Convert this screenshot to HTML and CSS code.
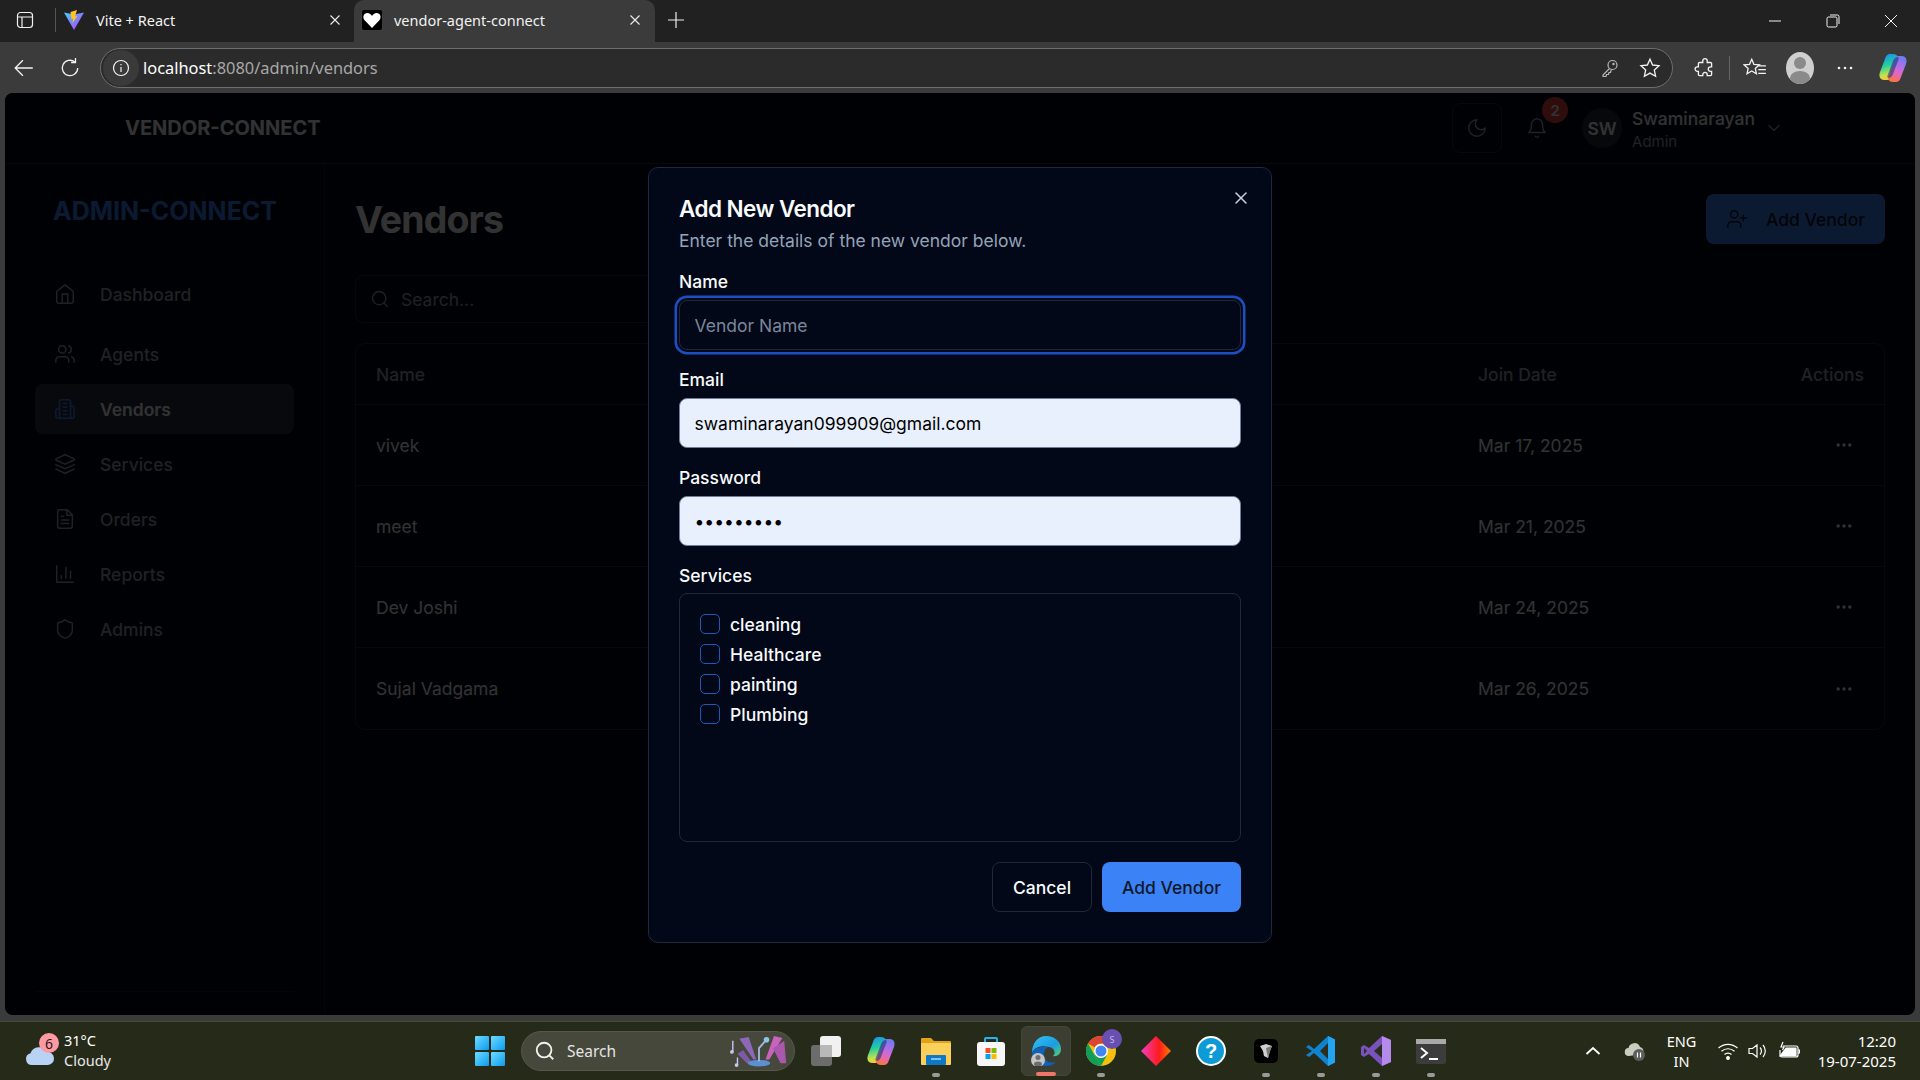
FILE: index.html
```html
<!DOCTYPE html>
<html lang="en">
<head>
<meta charset="utf-8">
<title>vendor-agent-connect</title>
<link rel="stylesheet" href="styles.css">
</head>
<body>
<svg class="defs" width="0" height="0" aria-hidden="true">
  <symbol id="i-home" viewBox="0 0 24 24"><path d="m3 9 9-7 9 7v11a2 2 0 0 1-2 2H5a2 2 0 0 1-2-2z"/><polyline points="9 22 9 12 15 12 15 22"/></symbol>
  <symbol id="i-users" viewBox="0 0 24 24"><path d="M16 21v-2a4 4 0 0 0-4-4H6a4 4 0 0 0-4 4v2"/><circle cx="9" cy="7" r="4"/><path d="M22 21v-2a4 4 0 0 0-3-3.87"/><path d="M16 3.13a4 4 0 0 1 0 7.75"/></symbol>
  <symbol id="i-building" viewBox="0 0 24 24"><path d="M6 22V4a2 2 0 0 1 2-2h8a2 2 0 0 1 2 2v18Z"/><path d="M6 12H4a2 2 0 0 0-2 2v6a2 2 0 0 0 2 2h2"/><path d="M18 9h2a2 2 0 0 1 2 2v9a2 2 0 0 1-2 2h-2"/><path d="M10 6h4"/><path d="M10 10h4"/><path d="M10 14h4"/><path d="M10 18h4"/></symbol>
  <symbol id="i-layers" viewBox="0 0 24 24"><path d="m12.83 2.18a2 2 0 0 0-1.66 0L2.6 6.08a1 1 0 0 0 0 1.83l8.58 3.91a2 2 0 0 0 1.66 0l8.58-3.9a1 1 0 0 0 0-1.83Z"/><path d="m22 17.65-9.17 4.16a2 2 0 0 1-1.66 0L2 17.65"/><path d="m22 12.65-9.17 4.16a2 2 0 0 1-1.66 0L2 12.65"/></symbol>
  <symbol id="i-file" viewBox="0 0 24 24"><path d="M14.5 2H6a2 2 0 0 0-2 2v16a2 2 0 0 0 2 2h12a2 2 0 0 0 2-2V7.5L14.5 2z"/><polyline points="14 2 14 8 20 8"/><line x1="16" x2="8" y1="13" y2="13"/><line x1="16" x2="8" y1="17" y2="17"/><line x1="10" x2="8" y1="9" y2="9"/></symbol>
  <symbol id="i-chart" viewBox="0 0 24 24"><path d="M3 3v18h18"/><path d="M18 17V9"/><path d="M13 17V5"/><path d="M8 17v-3"/></symbol>
  <symbol id="i-shield" viewBox="0 0 24 24"><path d="M20 13c0 5-3.5 7.5-7.66 8.95a1 1 0 0 1-.67-.01C7.5 20.5 4 18 4 13V6a1 1 0 0 1 1-1c2 0 4.5-1.2 6.24-2.72a1.17 1.17 0 0 1 1.52 0C14.51 3.81 17 5 19 5a1 1 0 0 1 1 1z"/></symbol>
  <symbol id="i-search" viewBox="0 0 24 24"><circle cx="11" cy="11" r="8"/><path d="m21 21-4.3-4.3"/></symbol>
  <symbol id="i-userplus" viewBox="0 0 24 24"><path d="M16 21v-2a4 4 0 0 0-4-4H6a4 4 0 0 0-4 4v2"/><circle cx="9" cy="7" r="4"/><line x1="19" x2="19" y1="8" y2="14"/><line x1="22" x2="16" y1="11" y2="11"/></symbol>
  <symbol id="i-moon" viewBox="0 0 24 24"><path d="M12 3a6 6 0 0 0 9 9 9 9 0 1 1-9-9Z"/></symbol>
  <symbol id="i-bell" viewBox="0 0 24 24"><path d="M6 8a6 6 0 0 1 12 0c0 7 3 9 3 9H3s3-2 3-9"/><path d="M10.3 21a1.94 1.94 0 0 0 3.4 0"/></symbol>
  <symbol id="i-chevron" viewBox="0 0 24 24"><path d="m6 9 6 6 6-6"/></symbol>
  <symbol id="i-x" viewBox="0 0 24 24"><path d="M18 6 6 18"/><path d="m6 6 12 12"/></symbol>
  <symbol id="i-dots" viewBox="0 0 24 24"><circle cx="12" cy="12" r="1"/><circle cx="19" cy="12" r="1"/><circle cx="5" cy="12" r="1"/></symbol>
  <symbol id="i-copilot" viewBox="0 0 30 30">
    <path d="M20 4c-1-2-2.500-3-5-3h-2C9 1 8 3 7 6L2 19c-1.500 4 0 8 4 8h3c3 0 4-2 5-5z" fill="url(#g-cop1)"/>
    <path d="M10 26c1 2 2.500 3 5 3h2c4 0 5-2 6-5l5-13c1.500-4 0-8-4-8h-3c-3 0-4 2-5 5z" fill="url(#g-cop2)"/>
    <path d="M19 4c1.500 0 2 1 1.500 2.500L15 21c-.8 2-2 3.500-4 4-1.500 0-2-1-1.500-2.500L15 8c.8-2 2-3.500 4-4z" fill="#0a2f6e" opacity=".55"/>
  </symbol>
  <linearGradient id="g-cop1" x1="0.2" y1="0" x2="0.4" y2="1"><stop offset="0" stop-color="#1a8cf5"/><stop offset=".45" stop-color="#22cfa0"/><stop offset=".8" stop-color="#c8e04a"/><stop offset="1" stop-color="#f8c63c"/></linearGradient>
  <linearGradient id="g-cop2" x1="0.7" y1="0" x2="0.4" y2="1"><stop offset="0" stop-color="#6a7cf2"/><stop offset=".5" stop-color="#c86be0"/><stop offset=".8" stop-color="#f0689a"/><stop offset="1" stop-color="#f5793a"/></linearGradient>
  <linearGradient id="g-vite" x1="0" y1="0" x2="1" y2="1"><stop offset="0" stop-color="#41d1ff"/><stop offset="1" stop-color="#bd34fe"/></linearGradient>
  <linearGradient id="g-edge" x1="0" y1="0" x2="1" y2="1"><stop offset="0" stop-color="#35c1f1"/><stop offset=".6" stop-color="#1b9de2"/><stop offset="1" stop-color="#52d36a"/></linearGradient>
  <linearGradient id="g-diamond" x1="0" y1="0" x2="1" y2="0"><stop offset="0" stop-color="#f23ec2"/><stop offset=".6" stop-color="#ff1b1b"/><stop offset="1" stop-color="#ff7a00"/></linearGradient>
  <linearGradient id="g-win" x1="0" y1="0" x2="1" y2="1"><stop offset="0" stop-color="#6fdcff"/><stop offset="1" stop-color="#0b9bf0"/></linearGradient>
</svg>

<div class="tabstrip">
  <svg class="chrome-ic sidebar-toggle" viewBox="0 0 20 20"><rect x="2.5" y="2.5" width="15" height="15" rx="3"/><path d="M2.5 7h15M7 7v10.5"/></svg>
  <span class="tab-divider"></span>
  <div class="tab">
    <svg class="favicon" viewBox="0 0 20 20"><path d="M0 2.5 10 20 20 2.5 10 4.5z" fill="url(#g-vite)"/><path d="M13 0 6.5 2 7.5 9 9 8.5 8.5 13 13.5 6 11 6.5z" fill="#ffc61a"/></svg>
    <span class="tab-title">Vite + React</span>
    <svg class="tab-close" viewBox="0 0 12 12"><path d="M1.5 1.5l9 9M10.5 1.5l-9 9"/></svg>
  </div>
  <div class="tab tab-active">
    <span class="heart-box"><svg viewBox="0 0 20 20"><path d="M10 18 2.6 10.2C.2 7.6 1.6 3 5.3 3 7.6 3 9 4.4 10 6c1-1.6 2.4-3 4.7-3 3.7 0 5.1 4.6 2.7 7.2z" fill="#fff"/></svg></span>
    <span class="tab-title">vendor-agent-connect</span>
    <svg class="tab-close" viewBox="0 0 12 12"><path d="M1.5 1.5l9 9M10.5 1.5l-9 9"/></svg>
  </div>
  <svg class="tab-new" viewBox="0 0 18 18"><path d="M9 1v16M1 9h16"/></svg>
  <div class="win-controls">
    <svg class="win-btn" viewBox="0 0 14 14"><path d="M1 7h12"/></svg>
    <svg class="win-btn" viewBox="0 0 14 14"><rect x="1" y="3" width="10" height="10" rx="1.5"/><path d="M4 1h7.5A1.5 1.5 0 0 1 13 2.500V10"/></svg>
    <svg class="win-btn" viewBox="0 0 14 14"><path d="M1 1l12 12M13 1 1 13"/></svg>
  </div>
</div>

<div class="toolbar">
  <svg class="chrome-ic tool-back" viewBox="0 0 20 20"><path d="M18 10H2M9 3l-7 7 7 7"/></svg>
  <svg class="chrome-ic tool-reload" viewBox="0 0 20 20"><path d="M17 10a7 7 0 1 1-2.500-5.400"/><path d="M15 1v4h-4"/></svg>
  <div class="address">
    <span class="site-info"><svg class="chrome-ic" viewBox="0 0 20 20"><circle cx="10" cy="10" r="7.500"/><path d="M10 9v5M10 6v1.200"/></svg></span>
    <span class="url"><span class="url-host">localhost</span>:8080/admin/vendors</span>
    <svg class="chrome-ic addr-key" viewBox="0 0 20 20"><circle cx="12.500" cy="7" r="4.500"/><path d="M9.500 10.500 3 17v1.500h3l.5-2h2l.5-2h1.500l.8-3"/><circle cx="13.500" cy="6" r=".6"/></svg>
    <svg class="chrome-ic addr-star" viewBox="0 0 20 20"><path d="m10 2 2.400 5.300 5.800.6-4.300 3.900 1.200 5.700L10 14.600l-5.100 2.900 1.200-5.700L1.800 7.900l5.800-.6z"/></svg>
  </div>
  <svg class="chrome-ic tool-puzzle" viewBox="0 0 20 20"><path d="M8 3.500a2 2 0 0 1 4 0V5h3a1 1 0 0 1 1 1v3h-1a2 2 0 0 0 0 4h1v3a1 1 0 0 1-1 1h-3v-1a2 2 0 0 0-4 0v1H5a1 1 0 0 1-1-1v-3H3a2 2 0 0 1 0-4h1V6a1 1 0 0 1 1-1h3z"/></svg>
  <span class="tool-divider"></span>
  <svg class="chrome-ic tool-fav" viewBox="0 0 22 20"><path d="M8 2l2 4.600 5 .5-3.700 3.300 1 4.900L8 12.800l-4.300 2.500 1-4.900L1 7.100l5-.5zM14 8h7M14 11.500h7M14 15h7"/></svg>
  <span class="profile"><svg viewBox="0 0 28 32"><circle cx="14" cy="11" r="6" fill="#8a8a8a"/><ellipse cx="14" cy="26" rx="10" ry="7" fill="#8a8a8a"/></svg></span>
  <svg class="tool-dots" viewBox="0 0 18 4"><circle cx="3" cy="2" r="1.300"/><circle cx="9" cy="2" r="1.300"/><circle cx="15" cy="2" r="1.300"/></svg>
  <svg class="tool-copilot"><use href="#i-copilot"/></svg>
</div>

<div class="viewport">
  <header class="app-header">
    <span class="brand">VENDOR-CONNECT</span>
    <div class="header-right">
      <span class="theme-btn"><svg class="lu lu-md"><use href="#i-moon"/></svg></span>
      <span class="bell-wrap"><svg class="lu lu-md"><use href="#i-bell"/></svg><span class="bell-badge">2</span></span>
      <span class="avatar">SW</span>
      <span class="user-text"><span class="user-name">Swaminarayan</span><span class="user-role">Admin</span></span>
      <svg class="lu lu-sm"><use href="#i-chevron"/></svg>
    </div>
  </header>
  <div class="app-body">
    <aside class="sidebar">
      <div class="side-logo">ADMIN-CONNECT</div>
      <nav class="side-nav">
        <a class="nav-item nav-first"><svg class="lu lu-md"><use href="#i-home"/></svg>Dashboard</a>
        <a class="nav-item"><svg class="lu lu-md"><use href="#i-users"/></svg>Agents</a>
        <a class="nav-item nav-active"><svg class="lu lu-md"><use href="#i-building"/></svg>Vendors</a>
        <a class="nav-item"><svg class="lu lu-md"><use href="#i-layers"/></svg>Services</a>
        <a class="nav-item"><svg class="lu lu-md"><use href="#i-file"/></svg>Orders</a>
        <a class="nav-item"><svg class="lu lu-md"><use href="#i-chart"/></svg>Reports</a>
        <a class="nav-item"><svg class="lu lu-md"><use href="#i-shield"/></svg>Admins</a>
      </nav>
      <div class="side-foot"></div>
    </aside>
    <main class="main">
      <div class="page-head">
        <h1 class="page-title">Vendors</h1>
        <span class="add-btn"><svg class="lu lu-md"><use href="#i-userplus"/></svg>Add Vendor</span>
      </div>
      <div class="search-box"><svg class="lu lu-sm"><use href="#i-search"/></svg>Search...</div>
      <div class="table">
        <div class="tr tr-head"><span>Name</span><span>Join Date</span><span class="col-end">Actions</span></div>
        <div class="tr"><span>vivek</span><span>Mar 17, 2025</span><span class="col-end"><svg class="lu lu-sm dots"><use href="#i-dots"/></svg></span></div>
        <div class="tr"><span>meet</span><span>Mar 21, 2025</span><span class="col-end"><svg class="lu lu-sm dots"><use href="#i-dots"/></svg></span></div>
        <div class="tr"><span>Dev Joshi</span><span>Mar 24, 2025</span><span class="col-end"><svg class="lu lu-sm dots"><use href="#i-dots"/></svg></span></div>
        <div class="tr tr-last"><span>Sujal Vadgama</span><span>Mar 26, 2025</span><span class="col-end"><svg class="lu lu-sm dots"><use href="#i-dots"/></svg></span></div>
      </div>
    </main>
  </div>

  <div class="overlay">
    <section class="modal">
      <svg class="lu modal-close"><use href="#i-x"/></svg>
      <h2 class="modal-title">Add New Vendor</h2>
      <p class="modal-desc">Enter the details of the new vendor below.</p>
      <div class="field field-first">
        <label class="field-label">Name</label>
        <input class="input input-focus" type="text" placeholder="Vendor Name">
      </div>
      <div class="field">
        <label class="field-label">Email</label>
        <input class="input input-fill" type="text" value="swaminarayan099909@gmail.com">
      </div>
      <div class="field">
        <label class="field-label">Password</label>
        <input class="input input-fill" type="password" value="123456789">
      </div>
      <label class="field-label services-label">Services</label>
      <div class="services">
        <div class="svc"><span class="check"></span>cleaning</div>
        <div class="svc"><span class="check"></span>Healthcare</div>
        <div class="svc"><span class="check"></span>painting</div>
        <div class="svc"><span class="check"></span>Plumbing</div>
      </div>
      <div class="modal-actions">
        <span class="btn btn-outline">Cancel</span>
        <span class="btn btn-primary">Add Vendor</span>
      </div>
    </section>
  </div>
</div>

<div class="taskbar">
  <div class="weather">
    <span class="weather-ic">
      <svg viewBox="0 0 30 20"><path d="M7 20a6 6 0 0 1-1.500-11.800A9 9 0 0 1 22 7a6.500 6.500 0 0 1 1 13z" fill="#b9d3f5"/></svg>
      <span class="weather-badge">6</span>
    </span>
    <span class="weather-text"><span class="w-temp">31°C</span><span class="w-desc">Cloudy</span></span>
  </div>
  <div class="task-center">
    <span class="slot">
      <svg class="tb-ic" viewBox="0 0 30 30"><rect x="0" y="0" width="14" height="14" fill="url(#g-win)" rx="1"/><rect x="16" y="0" width="14" height="14" fill="url(#g-win)" rx="1"/><rect x="0" y="16" width="14" height="14" fill="url(#g-win)" rx="1"/><rect x="16" y="16" width="14" height="14" fill="url(#g-win)" rx="1"/></svg>
    </span>
    <div class="task-search">
      <svg class="ts-ic"><use href="#i-search"/></svg>
      <span class="ts-text">Search</span>
      <svg class="ts-art" viewBox="0 0 62 34">
        <path d="M10 4 25 26 28 26 20 2z" fill="#8e68b8"/><path d="M56 3 42 26 38 26 47 1z" fill="#c864bc"/><path d="M46 14 54 30H60L58 6z" fill="#a958ae"/><path d="M14 16 24 30H18L8 20z" fill="#7d5aa8"/>
        <ellipse cx="31" cy="30" rx="12" ry="3.500" fill="#5d8fd0"/><path d="M31 28V14l7-8" stroke="#9fb8d8" stroke-width="2" fill="none"/><circle cx="39" cy="5" r="3" fill="#8fc4e4"/>
        <path d="M3 6v12M8 24v8" stroke="#c9c4f0" stroke-width="1.500"/><circle cx="2" cy="18" r="2" fill="#c9c4f0"/><circle cx="7" cy="32" r="2" fill="#c9c4f0"/>
      </svg>
    </div>
    <span class="slot">
      <svg class="tb-ic" viewBox="0 0 30 30"><rect x="0" y="9" width="21" height="21" rx="3" fill="#6c6c6c"/><rect x="9" y="0" width="21" height="21" rx="3" fill="#f1f1f1"/><rect x="9" y="9" width="12" height="12" fill="#b8b8b8"/></svg>
    </span>
    <span class="slot"><svg class="tb-ic"><use href="#i-copilot"/></svg></span>
    <span class="slot">
      <svg class="tb-ic" viewBox="0 0 30 30"><path d="M0 3a1 1 0 0 1 1-1h9l3 3h16a1 1 0 0 1 1 1v3H0z" fill="#e0a416"/><path d="M0 7h30v21a1 1 0 0 1-1 1H1a1 1 0 0 1-1-1z" fill="#fbd05a"/><rect x="5" y="19" width="20" height="10" rx="1" fill="#0f78c8"/><rect x="10" y="22" width="10" height="2" fill="#7cc3f0"/></svg>
      <span class="task-dot"></span>
    </span>
    <span class="slot">
      <svg class="tb-ic" viewBox="0 0 30 30"><path d="M9 6V3a1 1 0 0 1 1-1h10a1 1 0 0 1 1 1v3" fill="none" stroke="#20b5f0" stroke-width="2"/><rect x="1" y="6" width="28" height="24" rx="3" fill="#f7f7f7"/><rect x="9.500" y="12" width="5" height="5" fill="#f25022"/><rect x="15.500" y="12" width="5" height="5" fill="#7fba00"/><rect x="9.500" y="18" width="5" height="5" fill="#00a4ef"/><rect x="15.500" y="18" width="5" height="5" fill="#ffb900"/></svg>
    </span>
    <span class="slot slot-active">
      <svg class="tb-ic" viewBox="0 0 30 30"><path d="M15 0c9 0 15 6 15 13 0 5-4 8-8 7 3-2 2-8-4-9C9 9 3 12 1 17 1 7 7 0 15 0z" fill="url(#g-edge)"/><path d="M1 17c0 8 7 13 14 13 4 0 7-1 10-4-7 2-12-1-12-8 0-4 2-6 4-7-8-1-14 1-16 6z" fill="#0f62b8"/><circle cx="7" cy="24" r="7" fill="#c5c5c5"/><circle cx="7" cy="21.500" r="2.500" fill="#6d6d6d"/><ellipse cx="7" cy="28" rx="4" ry="2.500" fill="#6d6d6d"/></svg>
      <span class="task-dot task-dot-open"></span>
    </span>
    <span class="slot">
      <svg class="tb-ic" viewBox="0 0 30 30"><circle cx="15" cy="15" r="15" fill="#f4c20d"/><path d="M15 0a15 15 0 0 1 13 7.500H15A7.500 7.500 0 0 0 8.500 11.300L2 7.500A15 15 0 0 1 15 0z" fill="#db4437"/><path d="M2 7.500 8.500 19 15 30A15 15 0 0 1 2 7.500z" fill="#0f9d58"/><path d="M8.500 11 8.500 19 15 30 21 19 13 22z" fill="#0f9d58"/><circle cx="15" cy="15" r="7" fill="#fff"/><circle cx="15" cy="15" r="5.500" fill="#4285f4"/></svg>
      <span class="chrome-badge">S</span>
      <span class="task-dot"></span>
    </span>
    <span class="slot">
      <svg class="tb-ic" viewBox="0 0 30 30"><path d="M15 0 30 15 15 30 0 15z" fill="url(#g-diamond)"/></svg>
    </span>
    <span class="slot">
      <svg class="tb-ic" viewBox="0 0 30 30"><circle cx="15" cy="15" r="14" fill="#0d9bd8" stroke="#fff" stroke-width="2"/><text class="help-mark" x="15" y="22" text-anchor="middle">?</text></svg>
    </span>
    <span class="slot">
      <svg class="tb-ic" viewBox="0 0 30 30"><rect x="3" y="3" width="24" height="24" rx="5" fill="#000"/><path d="M9 10 15 8 21 10 19 15 17 22 13 20 12 15z" fill="#cfcfcf"/><path d="M15 12 21 10 19 15 17 22z" fill="#787878"/></svg>
      <span class="task-dot"></span>
    </span>
    <span class="slot">
      <svg class="tb-ic" viewBox="0 0 30 30"><path d="M22 0 29 3.500V26.500L22 30 8 17 3 21 0 19 6 15 0 11 3 9l5 4z" fill="#0f82d0"/><path d="M22 7 14 15l8 8z" fill="#2c2f1f"/><path d="M22 0 29 3.500V26.500L22 30z" fill="#24a4ee"/></svg>
      <span class="task-dot"></span>
    </span>
    <span class="slot">
      <svg class="tb-ic" viewBox="0 0 30 30"><path d="M21 0 30 4V26L21 30 8 18 3 21 0 19V11L3 9l5 3z" fill="#7a52bc"/><path d="M21 8 13 15l8 7z" fill="#2c2f1f"/><path d="M21 0 30 4V26L21 30z" fill="#b48bea"/><path d="M3 12v6l3-3z" fill="#2c2f1f"/></svg>
      <span class="task-dot"></span>
    </span>
    <span class="slot">
      <svg class="tb-ic" viewBox="0 0 30 30"><rect x="0" y="3" width="30" height="25" rx="2" fill="#3c3c3c"/><rect x="0" y="3" width="30" height="5" fill="#a9a9a9"/><path d="M5 12l6 5-6 5" fill="none" stroke="#fff" stroke-width="2"/><path d="M13 23h9" stroke="#fff" stroke-width="2"/></svg>
      <span class="task-dot"></span>
    </span>
  </div>
  <div class="tray">
    <svg class="tray-chev" viewBox="0 0 16 10"><path d="M1.500 8 8 2l6.500 6"/></svg>
    <svg class="tray-cloud" viewBox="0 0 22 20"><path d="M5 15a4 4 0 0 1-.5-8A6 6 0 0 1 16 6a4 4 0 0 1 2 7z" fill="#c9cdc0"/><circle cx="15" cy="14" r="6" fill="#5b5e5a"/><path d="M13.500 11.500v5M16.500 11.500v5" stroke="#fff" stroke-width="1.200"/></svg>
    <span class="tray-lang"><span>ENG</span><span>IN</span></span>
    <svg class="tray-ic" viewBox="0 0 22 20"><path d="M1.500 7a14 14 0 0 1 19 0M4.500 10.300a9.500 9.500 0 0 1 13 0M7.500 13.500a5 5 0 0 1 7 0"/><circle cx="11" cy="17" r="1.300" fill="#fff"/></svg>
    <svg class="tray-ic" viewBox="0 0 22 20"><path d="M2 7.500v5h3.500L10 16V4L5.500 7.500zM13 6.500a5 5 0 0 1 0 7M16 4a9 9 0 0 1 0 12"/></svg>
    <svg class="tray-ic" viewBox="0 0 22 20"><path d="M5 5h13a2 2 0 0 1 2 2v7a2 2 0 0 1-2 2H4a2 2 0 0 1-2-2V9"/><path d="M20 9h1.500v3H20"/><path d="M2 15 8 7h10v8z" fill="#fff"/><path d="M5 1 3 6h3L4.500 9"/></svg>
    <span class="tray-clock"><span>12:20</span><span>19-07-2025</span></span>
  </div>
</div>
</body>
</html>
```

FILE: styles.css
```css
* { box-sizing: border-box; }
html, body { margin: 0; padding: 0; }
body {
  width: 1920px; height: 1080px; overflow: hidden;
  display: flex; flex-direction: column;
  background: #3b3b3b; color: #fff;
  font-family: "Noto Sans", "Open Sans", sans-serif;
}
.defs { position: absolute; }
.chrome-ic { fill: none; stroke: #f2f2f2; stroke-width: 1.2; flex: none; }

/* Tab strip */
.tabstrip { height: 42px; background: #212121; display: flex; align-items: center; flex: none; }
.sidebar-toggle { width: 20px; height: 20px; margin: 0 0 2px 15px; }
.tab-divider { width: 1px; height: 24px; background: #555; margin: 0 0 2px 20px; }
.tab { height: 42px; display: flex; align-items: center; width: 299px; font-size: 14.5px; color: #f2f2f2; padding: 0 0 3px 8px; }
.tab-active { background: #3b3b3b; border-radius: 10px 10px 0 0; width: 301px; margin-left: -1px; padding-left: 8px; }
.favicon { width: 20px; height: 20px; flex: none; }
.heart-box { width: 20px; height: 20px; background: #000; border-radius: 2px; flex: none; display: flex; }
.heart-box svg { width: 20px; height: 20px; }
.tab-title { margin-left: 12px; flex: 1; white-space: nowrap; }
.tab-close { width: 12px; height: 12px; margin-right: 14px; fill: none; stroke: #eee; stroke-width: 1.1; flex: none; }
.tab-new { width: 18px; height: 18px; margin: 0 0 2px 12px; fill: none; stroke: #eee; stroke-width: 1.2; }
.win-controls { margin-left: auto; display: flex; align-items: center; gap: 44px; padding-right: 22px; }
.win-btn { width: 14px; height: 14px; fill: none; stroke: #f2f2f2; stroke-width: 1; }

/* Toolbar */
.toolbar { height: 51px; background: #3b3b3b; display: flex; align-items: center; flex: none; }
.tool-back { width: 22px; height: 22px; margin-left: 13px; }
.tool-reload { width: 22px; height: 22px; margin-left: 24px; }
.address {
  width: 1573px; height: 40px; margin-left: 19px; border: 1.5px solid #6e6e6e; border-radius: 20px;
  background: #2b2b2b; display: flex; align-items: center; flex: none; padding-left: 2px;
}
.site-info { width: 36px; height: 36px; border-radius: 50%; background: #3a3a3a; display: flex; align-items: center; justify-content: center; flex: none; }
.site-info svg { width: 20px; height: 20px; }
.url { margin-left: 4px; font-size: 16.4px; color: #a8a8a8; flex: 1; white-space: nowrap; }
.url-host { color: #fff; }
.addr-key { width: 20px; height: 20px; margin-right: 19px; stroke: #b8b8b8; }
.addr-star { width: 22px; height: 22px; margin-right: 11px; }
.tool-puzzle { width: 22px; height: 22px; margin-left: 21px; }
.tool-divider { width: 1px; height: 24px; background: #666; margin-left: 13px; }
.tool-fav { width: 24px; height: 22px; margin-left: 13px; }
.profile { width: 28px; height: 32px; border-radius: 50%; background: #cfcfcf; overflow: hidden; margin-left: 19px; flex: none; display: flex; }
.profile svg { width: 28px; height: 32px; }
.tool-dots { width: 18px; height: 4px; margin-left: 22px; fill: #f2f2f2; }
.tool-copilot { width: 30px; height: 30px; margin-left: 24px; }

/* Page viewport */
.viewport {
  position: relative; height: 922px; margin: 0 5px; flex: none; overflow: hidden;
  border-radius: 8px; background: #020817; color: #f8fafc;
  font-family: "Inter", sans-serif; display: flex; flex-direction: column;
}
.lu { fill: none; stroke: currentColor; stroke-width: 1.6; stroke-linecap: round; stroke-linejoin: round; flex: none; }
.lu-md { width: 22px; height: 22px; }
.lu-sm { width: 20px; height: 20px; }

.app-header { height: 71px; flex: none; border-bottom: 1px solid #1e293b; display: flex; align-items: center; padding: 0 131px 0 120px; }
.brand { font-size: 20px; font-weight: 700; }
.header-right { margin-left: auto; display: flex; align-items: center; color: #94a3b8; }
.theme-btn { width: 50px; height: 50px; border: 1px solid #1e293b; border-radius: 8px; display: flex; align-items: center; justify-content: center; }
.bell-wrap { position: relative; width: 40px; height: 40px; margin-left: 15px; display: flex; align-items: center; justify-content: center; }
.bell-badge {
  position: absolute; left: 25px; top: -11px; width: 26px; height: 26px; border-radius: 50%;
  background: #ef4444; color: #f8fafc; font-size: 15px; font-weight: 600;
  display: flex; align-items: center; justify-content: center;
}
.avatar { width: 40px; height: 40px; margin-left: 25px; border-radius: 50%; background: #1e293b; color: #f8fafc; font-size: 17.5px; font-weight: 600; display: flex; align-items: center; justify-content: center; }
.user-text { display: flex; flex-direction: column; margin: 4px 9px 0 10px; }
.user-name { font-size: 17.5px; font-weight: 500; color: #f8fafc; line-height: 22px; }
.user-role { font-size: 15px; line-height: 22px; margin-top: 1px; color: #94a3b8; }

.app-body { flex: 1; display: flex; min-height: 0; }
.sidebar { width: 320px; flex: none; border-right: 1px solid #141c2b; padding: 32px 30px 23px; display: flex; flex-direction: column; }
.side-logo { font-size: 25px; line-height: 30px; font-weight: 700; color: #3b82f6; margin: 0 0 43px 18px; white-space: nowrap; }
.side-nav { display: flex; flex-direction: column; gap: 5px; }
.nav-item { height: 50px; padding-left: 19px; border-radius: 8px; display: flex; align-items: center; gap: 24px; font-size: 17.5px; font-weight: 500; color: #94a3b8; }
.nav-first { margin-bottom: 5px; }
.nav-active { background: #2a2f3d; color: #f8fafc; font-weight: 600; }
.nav-active .lu { color: #3b82f6; }
.side-foot { margin-top: auto; border-top: 1px solid #141c2b; }

.main { flex: 1; padding: 30px; min-width: 0; }
.page-head { display: flex; align-items: center; justify-content: space-between; height: 50px; }
.page-title { margin: 0; font-size: 37.5px; font-weight: 700; letter-spacing: -0.9px; }
.add-btn { height: 50px; width: 179px; padding-left: 20px; background: #3b82f6; color: #0f172a; border-radius: 8px; display: flex; align-items: center; gap: 18px; font-size: 17.5px; font-weight: 500; }
.search-box { width: 560px; height: 48px; margin-top: 31px; border: 1px solid #1e293b; border-radius: 8px; display: flex; align-items: center; gap: 11px; padding-left: 14px; font-size: 17.5px; color: #94a3b8; }
.table { margin-top: 20px; border: 1px solid #1e293b; border-radius: 10px; font-size: 17.5px; }
.tr { height: 81px; display: grid; grid-template-columns: 1fr 200px 186px; align-items: center; padding: 0 20px; border-bottom: 1px solid #1e293b; }
.tr-head { height: 61px; color: #94a3b8; font-weight: 500; }
.tr-last { border-bottom: 0; }
.col-end { text-align: right; display: flex; justify-content: flex-end; }
.dots { color: #f8fafc; stroke-width: 2; margin-right: 10px; }

/* Overlay + modal */
.overlay { position: absolute; inset: 0; padding-top: 2px; background: rgba(0, 0, 0, .8); display: flex; align-items: center; justify-content: center; }
.modal {
  position: relative; width: 624px; height: 776px; padding: 28px 30px 30px; flex: none;
  background: #020817; border: 1px solid #1e293b; border-radius: 10px;
  display: flex; flex-direction: column;
}
.modal-close { position: absolute; top: 20px; right: 20px; width: 20px; height: 20px; color: #cbd5e1; stroke-width: 1.8; }
.modal-title { margin: 0; font-size: 22.5px; line-height: 25px; font-weight: 600; letter-spacing: -0.55px; }
.modal-desc { margin: 7px 0 0; font-size: 17.5px; line-height: 25px; color: #94a3b8; }
.field { display: flex; flex-direction: column; margin-bottom: 21px; }
.field-first { margin-top: 20px; }
.field-label { font-size: 17.5px; line-height: 18px; font-weight: 500; margin-bottom: 9px; }
.input { width: 100%; height: 50px; padding: 0 14.5px; border-radius: 8px; border: 1px solid #1e293b; font: 400 17.5px "Inter", sans-serif; outline: 0; }
.input::placeholder { color: #7a869c; opacity: 1; }
.input-focus { background: #020817; color: #f8fafc; box-shadow: 0 0 0 2px #020817, 0 0 0 4.5px #1d4fc4; }
.input-fill { background: #e8f0fe; color: #000; border-color: #6f7d96; }
.services-label { margin-bottom: 8px; }
.services { height: 250px; border: 1px solid #1e293b; border-radius: 8px; padding: 20px 20px; display: flex; flex-direction: column; gap: 10px; }
.svc { display: flex; align-items: center; gap: 10px; height: 20px; font-size: 17.5px; font-weight: 500; }
.check { width: 20px; height: 20px; border: 1.25px solid #1f5ab8; border-radius: 5px; flex: none; }
.modal-actions { display: flex; justify-content: flex-end; gap: 10px; margin-top: 20px; }
.btn { height: 50px; border-radius: 8px; display: flex; align-items: center; justify-content: center; font-size: 17.5px; font-weight: 500; }
.btn-outline { width: 100px; border: 1px solid #1e293b; }
.btn-primary { width: 139px; background: #3b82f6; color: #0f172a; }

/* Taskbar */
.taskbar { height: 59px; margin-top: 6px; background: #262a18; flex: none; display: flex; align-items: center; font-size: 14.5px; border-top: 1px solid #47493c; }
.weather { width: 462px; padding-left: 25px; flex: none; display: flex; align-items: center; }
.weather-ic { position: relative; width: 30px; height: 20px; margin-top: 8px; flex: none; }
.weather-ic svg { width: 30px; height: 20px; display: block; }
.weather-badge { position: absolute; left: 14px; top: -12px; width: 20px; height: 20px; border-radius: 50%; background: #ff9aa2; color: #1a1a1a; font-size: 14px; display: flex; align-items: center; justify-content: center; }
.weather-text { display: flex; flex-direction: column; margin: -2px 0 0 9px; line-height: 20px; }
.w-desc { color: #e8e8e8; }
.task-center { display: flex; align-items: center; }
.slot { position: relative; width: 55px; height: 50px; flex: none; display: flex; align-items: center; justify-content: center; border-radius: 6px; }
.slot-active { width: 50px; margin: 0 2.5px; background: #3b3e30; border: 1px solid #43463a; }
.tb-ic { width: 30px; height: 30px; }
.task-search { width: 274px; height: 40px; margin: 0 3px 0 4px; background: #45483a; border: 1px solid #55584a; border-radius: 20px; display: flex; align-items: center; padding-left: 12px; flex: none; }
.ts-ic { width: 22px; height: 22px; fill: none; stroke: #f2f2f2; stroke-width: 2; }
.ts-text { margin-left: 11px; font-size: 15.5px; color: #e4e4e4; flex: 1; }
.ts-art { width: 58px; height: 34px; margin-right: 6px; }
.task-dot { position: absolute; left: 50%; bottom: -1px; width: 8px; height: 4px; margin-left: -4px; border-radius: 2px; background: #9a9a9a; }
.task-dot-open { width: 20px; margin-left: -10px; background: #ef7767; }
.chrome-badge { position: absolute; left: 29px; top: 3px; width: 20px; height: 20px; border-radius: 50%; background: #6a4fb2; color: #c9b6ef; font-size: 9px; display: flex; align-items: center; justify-content: center; }
.help-mark { font: 700 20px "Liberation Sans", sans-serif; fill: #fff; }
.tray { margin-left: auto; display: flex; align-items: center; padding-right: 24px; }
.tray-chev { width: 16px; height: 10px; fill: none; stroke: #fff; stroke-width: 1.8; }
.tray-cloud { width: 22px; height: 20px; margin-left: 23px; }
.tray-lang { width: 44px; margin: 0 13px 0 14px; display: flex; flex-direction: column; align-items: center; line-height: 20px; }
.tray-ic { width: 22px; height: 20px; margin-right: 8.5px; fill: none; stroke: #fff; stroke-width: 1.2; }
.tray-clock { width: 80px; margin-left: 8px; display: flex; flex-direction: column; align-items: flex-end; line-height: 20px; font-size: 15px; }
```
